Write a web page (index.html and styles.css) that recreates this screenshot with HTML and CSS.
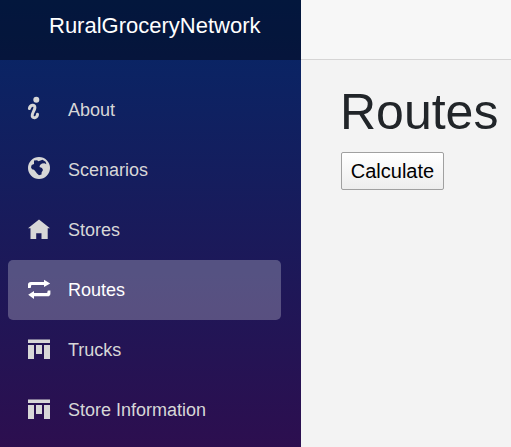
FILE: index.html
```html
<!DOCTYPE html>
<html lang="en">
<head>
<meta charset="utf-8">
<title>RuralGroceryNetwork</title>
<link rel="stylesheet" href="styles.css">
</head>
<body>
<div class="app">
  <aside class="sidebar">
    <div class="brand">RuralGroceryNetwork</div>
    <nav class="nav">
      <a class="item"><svg class="icon" viewBox="0 0 24 24"><circle cx="9.3" cy="3.8" r="3"/><path class="line" d="M2.4 12.6C3 9 8 7.8 7.9 11.6C7.8 14.5 4.6 17.5 5.2 20C6 23 10.4 21.8 10.5 18.2"/></svg><span>About</span></a>
      <a class="item"><svg class="icon" viewBox="0 0 24 24"><path fill-rule="evenodd" d="M12 1a11 11 0 1 0 0 22a11 11 0 1 0 0-22ZM7 4.6L10 4.2L11.5 5.2L15.5 3.8L18.6 5.8L19.4 8.2L17.4 7.3L15 7.5L13 9L12.5 11L15 12L16 14L14.6 16.5L14.5 18.6L12 19.2L10 17.4L8.5 15.6L7 13.8L5 13.2L4 11.2L4.7 9L7 8Z"/></svg><span>Scenarios</span></a>
      <a class="item"><svg class="icon" viewBox="0 0 24 24"><path d="M12 3.5L23 12.3H20.7V23H14.5V17.2H9.2V23H3.5V12.3H1Z"/></svg><span>Stores</span></a>
      <a class="item active"><svg class="icon" viewBox="0 0 24 24"><path d="M1 11.9V8.6Q1 5.9 4 5.9H17V3.7L23.2 7.4L17 11V8.9H5Q4 8.9 4 9.9V11.2Q4 11.9 3 11.9ZM23.4 14.5V17.4Q23.4 20.2 20.4 20.2H7V22.9L1.2 18.7L7 15V17.1H19.5Q20.5 17.1 20.5 16.1V15.3Q20.5 14.5 21.4 14.5Z"/></svg><span>Routes</span></a>
      <a class="item"><svg class="icon" viewBox="0 0 24 24"><path d="M1 3.6H23V7H1ZM1 9H7V23H1ZM9 9H15V18H9ZM17 9H23V23H17Z"/></svg><span>Trucks</span></a>
      <a class="item"><svg class="icon" viewBox="0 0 24 24"><path d="M1 3.6H23V7H1ZM1 9H7V23H1ZM9 9H15V18H9ZM17 9H23V23H17Z"/></svg><span>Store Information</span></a>
    </nav>
  </aside>
  <main class="main">
    <div class="topbar"></div>
    <div class="content">
      <h1>Routes</h1>
      <button class="calculate">Calculate</button>
    </div>
  </main>
</div>
</body>
</html>
```

FILE: styles.css
```css
* { box-sizing: border-box; }
body {
  margin: 0;
  font-family: "Liberation Sans", Arial, sans-serif;
  background: #f3f3f3;
}
.app { display: flex; height: 447px; overflow: hidden; }
.sidebar {
  width: 301px;
  flex: none;
  background: linear-gradient(180deg, rgb(5, 39, 103) 0, #3a0647 600px);
}
.brand {
  height: 60px;
  padding: 13px 0 0 49px;
  font-size: 22px;
  line-height: 26px;
  color: #fff;
  background: rgba(0, 0, 0, .4);
}
.nav { padding: 20px 20px 0 8px; }
.item {
  display: flex;
  align-items: center;
  height: 60px;
  padding: 0 0 4px 19px;
  gap: 17px;
  border-radius: 5px;
  font-size: 18px;
  line-height: 60px;
  color: #d7d7d7;
  white-space: nowrap;
}
.item span { margin-top: 4px; }
.active { background: rgba(255, 255, 255, .25); color: #fff; }
.icon { width: 24px; height: 24px; flex: none; fill: currentColor; }
.line { fill: none; stroke: currentColor; stroke-width: 3; stroke-linecap: round; }
.main { flex: 1; min-width: 0; }
.topbar { height: 60px; background: #f7f7f7; border-bottom: 1px solid #d6d5d5; }
.content { padding: 22px 0 0 40px; }
h1 {
  margin: 0 0 10px -1px;
  font-size: 50px;
  font-weight: 400;
  line-height: 60px;
  color: #212529;
}
.calculate {
  display: block;
  width: 103px;
  height: 38px;
  padding: 0;
  font-family: inherit;
  font-size: 20px;
  color: #000;
  border: 1px solid #a0a0a0;
  border-radius: 2px;
  background: linear-gradient(#fff, #ededed);
}
```
